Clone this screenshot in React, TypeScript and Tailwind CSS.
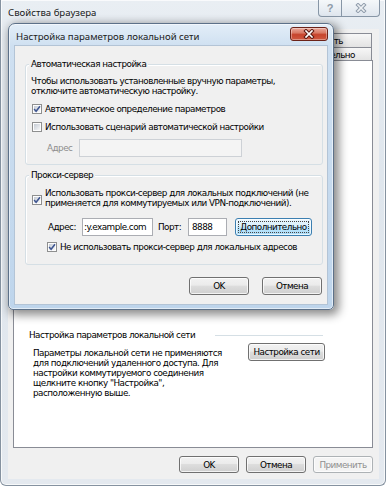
import React, { useId } from "react";

const BODY = "font-['DejaVu_Sans',sans-serif] text-[8.8px] leading-[10px] tracking-[-0.5px]";
const TITLE = "font-['Noto_Sans',sans-serif] text-[9.6px] leading-[12px]";

function CheckBox({ checked = false }: { checked?: boolean }) {
  const id = useId().replace(/:/g, "");
  return (
    <svg width="10" height="10" viewBox="0 0 10 10" className="block shrink-0">
      <defs>
        <linearGradient id={`cb${id}`} x1="0" y1="0" x2="1" y2="1">
          <stop offset="0" stopColor="#c5cbd4" />
          <stop offset="1" stopColor="#f6f7f8" />
        </linearGradient>
      </defs>
      <rect x="0.5" y="0.5" width="9" height="9" fill="#fdfdfd" stroke="#8e8f8f" />
      <rect x="2" y="2" width="6" height="6" fill={`url(#cb${id})`} />
      {checked && (
        <path d="M2.1 5.1 L4.1 7.3 L8 2.2" fill="none" stroke="#3e5590" strokeWidth="1.5" />
      )}
    </svg>
  );
}

type Kind = "normal" | "focus" | "disabled";

function WinButton({
  children,
  className = "",
  kind = "normal",
}: {
  children: React.ReactNode;
  className?: string;
  kind?: Kind;
}) {
  const styles: Record<Kind, string> = {
    normal:
      "border-[#707070] bg-[linear-gradient(180deg,#f2f2f2_0%,#ebebeb_45%,#dddddd_50%,#cfcfcf_100%)] text-black",
    focus:
      "border-[#3c7fb1] bg-[linear-gradient(180deg,#eaf6fd_0%,#d9f0fc_45%,#bee6fd_50%,#a7d9f5_100%)] text-black",
    disabled: "border-[#adb2b5] bg-[#f4f4f4] text-[#8f8f8f]",
  };
  return (
    <button
      type="button"
      className={`relative flex shrink-0 items-center justify-center rounded-[3px] border shadow-[inset_0_0_0_1px_rgba(255,255,255,0.75)] ${styles[kind]} ${className}`}
    >
      {kind === "focus" && (
        <span className="absolute inset-[2px] border border-dotted border-[#444]" />
      )}
      <span className="relative whitespace-nowrap">{children}</span>
    </button>
  );
}

function XGlyph({ outer, inner }: { outer: string; inner: string }) {
  return (
    <svg width="12" height="10" viewBox="0 0 12 10" className="block">
      <path d="M3 2 L9 8 M9 2 L3 8" stroke={outer} strokeWidth="3.6" strokeLinecap="square" fill="none" />
      <path d="M3 2 L9 8 M9 2 L3 8" stroke={inner} strokeWidth="1.6" strokeLinecap="square" fill="none" />
    </svg>
  );
}

const TAB =
  "flex items-center border border-b-0 border-[#898c95] bg-[linear-gradient(180deg,#f7f7f7,#e3e3e3)] pt-[1px] whitespace-nowrap";

export default function App() {
  return (
    <div className={`relative h-[491px] w-[389px] overflow-hidden bg-white text-black ${BODY}`}>
      {/* Outer window: Свойства браузера */}
      <div className="absolute left-0 top-0 flex h-[486px] w-[386px] flex-col rounded-b-[6px] border border-t-0 border-[#8592a0] bg-[linear-gradient(180deg,#e9eef3_0%,#dfe6ed_35%,#e4e9ef_100%)] shadow-[inset_0_0_0_1px_rgba(255,255,255,0.7)]">
        <div className="relative h-[29px] shrink-0 pl-[7px] pt-[7px]">
          <span className={`block ${TITLE} tracking-normal text-[#1b1b1b]`}>Свойства браузера</span>
          <div className="absolute right-[5px] top-0 flex h-[17px]">
            <div className="flex w-[24px] items-center justify-center rounded-bl-[4px] border border-t-0 border-[#8796a6] bg-[linear-gradient(180deg,#f5f8fa,#dfe6ee)] font-['Liberation_Sans',sans-serif] text-[11px] font-bold leading-[11px] tracking-normal text-[#8d9aa8]">
              ?
            </div>
            <div className="-ml-px flex w-[39px] items-center justify-center rounded-br-[4px] border border-t-0 border-[#8796a6] bg-[linear-gradient(180deg,#f5f8fa,#dfe6ee)]">
              <XGlyph outer="#8f9cab" inner="#eef1f4" />
            </div>
          </div>
        </div>

        <div className="ml-[7px] mr-[6px] flex h-[450px] shrink-0 flex-col bg-[#f0f0f0] pl-[5px] pr-[6px] pt-[4px]">
          {/* tab rows (mostly hidden behind the dialog) */}
          <div className="flex h-[14px] shrink-0">
            <div className={`${TAB} w-[82px]`} />
            <div className={`${TAB} -ml-px w-[130px]`} />
            <div className={`${TAB} -ml-px w-[149px] justify-end pr-[28px]`}>Конфиденциальность</div>
          </div>
          <div className="flex h-[13px] shrink-0">
            <div className={`${TAB} w-[87px]`} />
            <div className="-mb-px -ml-px h-[14px] w-[86px] border border-b-0 border-[#898c95] bg-white" />
            <div className={`${TAB} -ml-px w-[86px]`} />
            <div className={`${TAB} -ml-px w-[103px] justify-end pr-[16px]`}>Дополнительно</div>
          </div>

          {/* tab panel */}
          <div className="flex h-[388px] shrink-0 flex-col border border-[#898c95] bg-white pl-[15px] pt-[269px]">
            <div className="flex w-[294px] items-center">
              <span className="whitespace-nowrap">Настройка параметров локальной сети</span>
              <div className="ml-auto h-px w-[108px] bg-[#d5dfe5]" />
            </div>
            <div className="ml-[4px] mt-[3px] flex w-[292px] items-start">
              <p className="mt-[5px] whitespace-nowrap">
                Параметры локальной сети не применяются
                <br />
                для подключений удаленного доступа. Для
                <br />
                настройки коммутируемого соединения
                <br />
                щелкните кнопку "Настройка",
                <br />
                расположенную выше.
              </p>
              <WinButton className="ml-auto h-[18px] w-[77px]">Настройка сети</WinButton>
            </div>
          </div>

          {/* bottom buttons */}
          <div className="mt-[8px] flex justify-end gap-[7px]">
            <WinButton className="h-[17px] w-[60px]">OK</WinButton>
            <WinButton className="h-[17px] w-[60px]">Отмена</WinButton>
            <WinButton kind="disabled" className="h-[17px] w-[60px]">
              Применить
            </WinButton>
          </div>
        </div>
      </div>

      {/* Inner dialog: Настройка параметров локальной сети */}
      <div className="absolute left-[8px] top-[23px] z-20 flex h-[287px] w-[326px] flex-col rounded-b-[5px] rounded-t-[7px] border border-[#5d7189] bg-[linear-gradient(180deg,#e3eef8_0%,#cfe0f1_22px,#bed5ec_100%)] shadow-[3px_3px_10px_2px_rgba(0,0,0,0.45),inset_0_0_0_1px_rgba(255,255,255,0.55)]">
        <div className="relative h-[21px] shrink-0 pl-[7px] pt-[7px]">
          <span className={`block ${TITLE} tracking-normal text-[#1b1b1b]`}>
            Настройка параметров локальной сети
          </span>
          <div className="absolute left-[281px] top-[3px] flex h-[14px] w-[38px] items-center justify-center rounded-[3px] border border-[#6b2218] bg-[linear-gradient(180deg,#eba99b_0%,#d97b66_40%,#c7442c_55%,#cf5a42_100%)] shadow-[inset_0_0_0_1px_rgba(255,255,255,0.35)]">
            <XGlyph outer="#5a1a12" inner="#ffffff" />
          </div>
        </div>

        <div className="mx-[5px] flex h-[260px] shrink-0 flex-col bg-[#f0f0f0] shadow-[inset_0_0_0_1px_#b3c4d6]">
          {/* Group 1 */}
          <div className="relative ml-[11px] mt-[19px] flex h-[101px] w-[298px] flex-col rounded-[3px] border border-[#d5dfe5] pl-[5px] pt-[11px] shadow-[inset_1px_1px_0_#ffffff]">
            <div className="absolute -top-[6px] left-[3px] bg-[#f0f0f0] px-[2px] whitespace-nowrap">
              Автоматическая настройка
            </div>
            <p className="whitespace-nowrap">
              Чтобы использовать установленные вручную параметры,
              <br />
              отключите автоматическую настройку.
            </p>
            <div className="ml-[1px] mt-[8px] flex h-[10px] items-center gap-[3px]">
              <CheckBox checked />
              <span className="whitespace-nowrap">Автоматическое определение параметров</span>
            </div>
            <div className="ml-[1px] mt-[8px] flex h-[10px] items-center gap-[3px]">
              <CheckBox />
              <span className="whitespace-nowrap">Использовать сценарий автоматической настройки</span>
            </div>
            <div className="mt-[7px] flex h-[18px] items-center">
              <span className="ml-[16px] w-[32px] text-[#8d8d8d]">Адрес</span>
              <div className="h-[18px] w-[163px] border border-[#cdd1d6] bg-[#f4f4f4]" />
            </div>
          </div>

          {/* Group 2 */}
          <div className="relative ml-[11px] mt-[10px] flex h-[90px] w-[298px] flex-col rounded-[3px] border border-[#d5dfe5] pl-[5px] pt-[12px] shadow-[inset_1px_1px_0_#ffffff]">
            <div className="absolute -top-[6px] left-[3px] bg-[#f0f0f0] px-[2px] whitespace-nowrap">
              Прокси-сервер
            </div>
            <div className="ml-[1px] flex items-start gap-[3px]">
              <div className="mt-[7px]">
                <CheckBox checked />
              </div>
              <p className="whitespace-nowrap">
                Использовать прокси-сервер для локальных подключений (не
                <br />
                применяется для коммутируемых или VPN-подключений).
              </p>
            </div>
            <div className="mt-[10px] flex h-[18px] items-center">
              <span className="ml-[17px] w-[34px]">Адрес:</span>
              <div className="flex h-[18px] w-[71px] items-center overflow-hidden whitespace-nowrap border border-[#abadb3] bg-white pl-[1px]">
                :y.example.com
              </div>
              <span className="ml-[5px] w-[30px]">Порт:</span>
              <div className="flex h-[18px] w-[39px] items-center border border-[#abadb3] bg-white pl-[3px]">
                8888
              </div>
              <WinButton kind="focus" className="ml-[8px] h-[18px] w-[77px]">
                Дополнительно
              </WinButton>
            </div>
            <div className="ml-[16px] mt-[6px] flex h-[10px] items-center gap-[3px]">
              <CheckBox checked />
              <span className="whitespace-nowrap">Не использовать прокси-сервер для локальных адресов</span>
            </div>
          </div>

          <div className="mt-[12px] flex justify-end gap-[13px] pr-[6px]">
            <WinButton className="h-[18px] w-[60px]">OK</WinButton>
            <WinButton className="h-[18px] w-[60px]">Отмена</WinButton>
          </div>
        </div>
      </div>
    </div>
  );
}
